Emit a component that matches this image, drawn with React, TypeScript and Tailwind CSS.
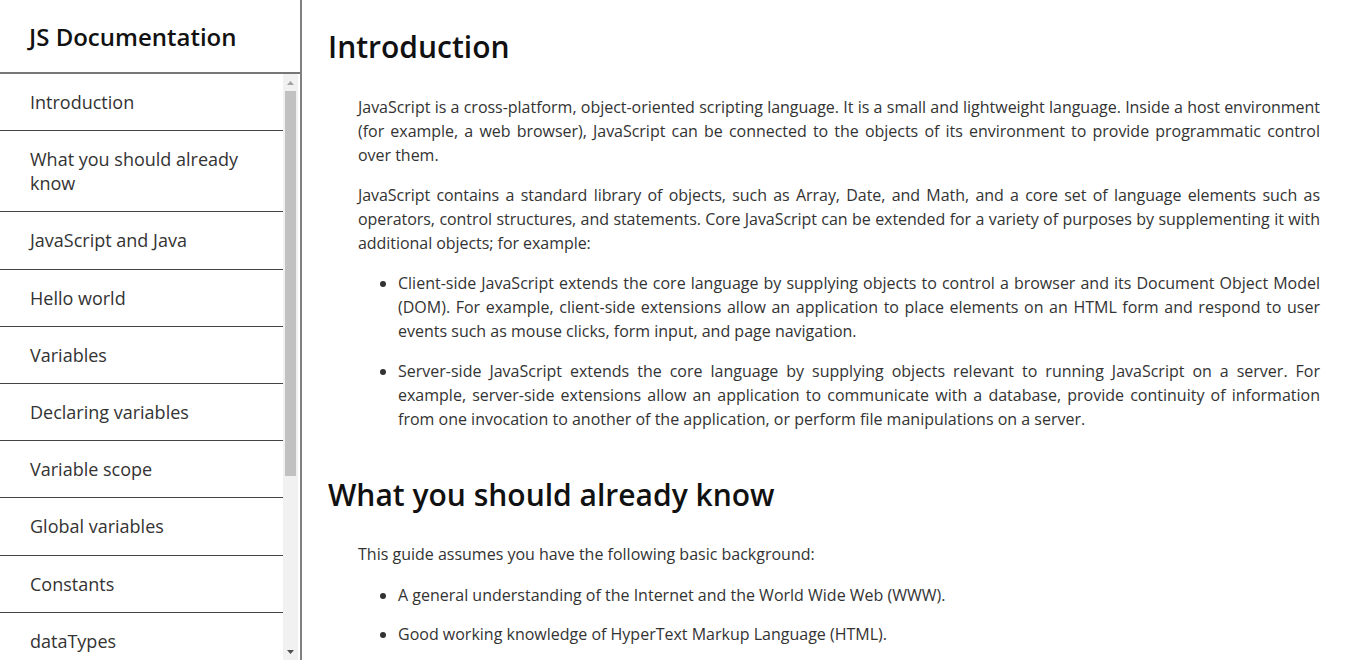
import React from "react";

const navItems = [
  "Introduction",
  "What you should already know",
  "JavaScript and Java",
  "Hello world",
  "Variables",
  "Declaring variables",
  "Variable scope",
  "Global variables",
  "Constants",
  "dataTypes",
  "if...else statement",
  "while statement",
  "Function declarations",
  "Reference",
];

function FakeScrollbar() {
  return (
    <div className="w-[15px] shrink-0 bg-[#f1f1f1] flex flex-col items-center">
      {/* up arrow */}
      <div className="h-[17px] w-full flex items-center justify-center">
        <svg width="7" height="4" viewBox="0 0 7 4">
          <path d="M3.5 0 L7 4 L0 4 Z" fill="#a3a3a3" />
        </svg>
      </div>
      <div className="w-[11px] h-[385px] bg-[#c1c1c1] mx-auto" />
      <div className="flex-1" />
      {/* down arrow */}
      <div className="h-[17px] w-full flex items-center justify-center">
        <svg width="7" height="4" viewBox="0 0 7 4">
          <path d="M0 0 L7 0 L3.5 4 Z" fill="#505050" />
        </svg>
      </div>
    </div>
  );
}

export default function App() {
  return (
    <div
      className="flex h-[660px] w-[1350px] overflow-hidden bg-white text-[#333]"
      style={{ fontFamily: '"Open Sans", "Noto Sans", sans-serif' }}
    >
      {/* Side navigation */}
      <nav className="w-[302px] shrink-0 border-r-2 border-[#808080] flex flex-col h-full">
        <header className="h-[74px] shrink-0 border-b-2 border-[#777] flex items-center pl-[29px]">
          <h1 className="text-[24px] font-semibold text-[#111] leading-none pt-[1px]">JS Documentation</h1>
        </header>
        <div className="flex flex-1 min-h-0 pr-[2px]">
          <ul className="w-[283px] overflow-hidden">
            {navItems.map((item) => (
              <li key={item} className="border-b border-[#444] px-[30px] py-[16.1px] text-[18px] leading-[24px] text-[#333]">
                {item}
              </li>
            ))}
          </ul>
          <FakeScrollbar />
        </div>
      </nav>

      {/* Main content */}
      <main className="flex-1 pl-[26px] pr-[30px] pt-[23px] overflow-hidden">
        <section>
          <h2 className="text-[30px] leading-[48px] font-semibold text-[#111]">Introduction</h2>
          <div className="pl-[30px] mt-[24px] text-[16px] leading-[24px] text-justify">
            <p className="mb-4 tracking-[-0.025px]">
              JavaScript is a cross-platform, object-oriented scripting language. It is a small and lightweight
              language. Inside a host environment (for example, a web browser), JavaScript can be connected to the
              objects of its environment to provide programmatic control over them.
            </p>
            <p className="mb-4 tracking-[-0.05px]">
              JavaScript contains a standard library of objects, such as Array, Date, and Math, and a core set of
              language elements such as operators, control structures, and statements. Core JavaScript can be
              extended for a variety of purposes by supplementing it with additional objects; for example:
            </p>
            <ul className="list-disc pl-[40px]">
              <li className="mb-4">
                Client-side JavaScript extends the core language by supplying objects to control a browser and its
                Document Object Model (DOM). For example, client-side extensions allow an application to place
                elements on an HTML form and respond to user events such as mouse clicks, form input, and page
                navigation.
              </li>
              <li>
                Server-side JavaScript extends the core language by supplying objects relevant to running JavaScript
                on a server. For example, server-side extensions allow an application to communicate with a database,
                provide continuity of information from one invocation to another of the application, or perform file
                manipulations on a server.
              </li>
            </ul>
          </div>
        </section>

        <section className="mt-[40px]">
          <h2 className="text-[30px] leading-[48px] font-semibold text-[#111]">What you should already know</h2>
          <div className="pl-[30px] mt-[23px] text-[16px] leading-[24px] text-justify">
            <p className="mb-[17px]">This guide assumes you have the following basic background:</p>
            <ul className="list-disc pl-[40px]">
              <li className="mb-[15px]">A general understanding of the Internet and the World Wide Web (WWW).</li>
              <li className="mb-[15px]">Good working knowledge of HyperText Markup Language (HTML).</li>
              <li>Some programming experience. If you are new to programming, try one of the tutorials linked on the main page about JavaScript.</li>
            </ul>
          </div>
        </section>
      </main>
    </div>
  );
}
